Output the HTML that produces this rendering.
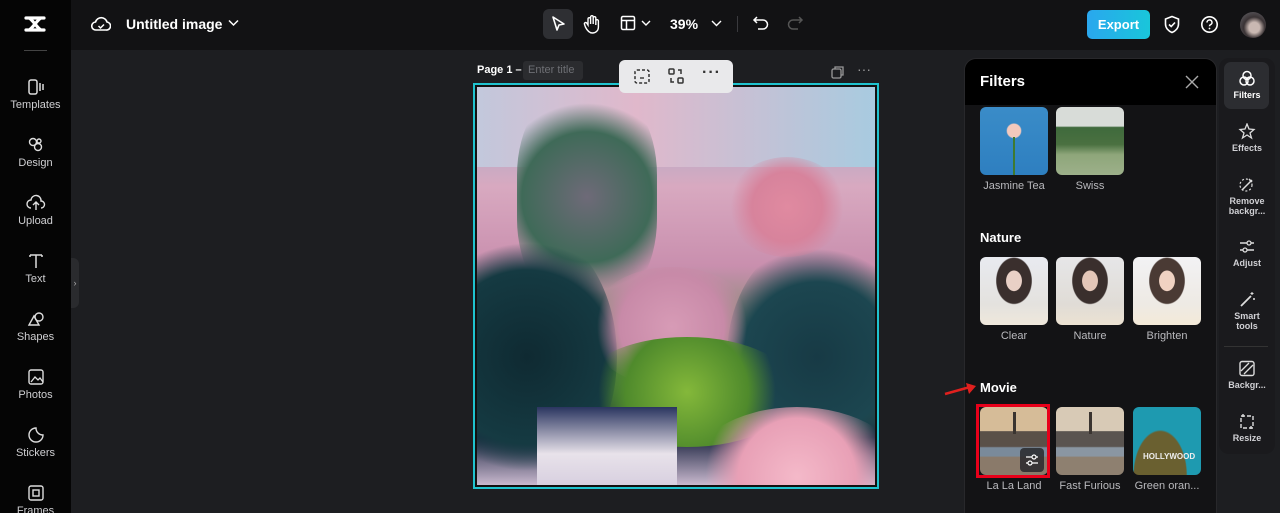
<!DOCTYPE html>
<html><head><meta charset="utf-8"><style>
*{margin:0;padding:0;box-sizing:border-box}
html,body{width:1280px;height:513px;overflow:hidden}
body{background:#1d1e21;font-family:"Liberation Sans",sans-serif;color:#fff;position:relative}
.abs{position:absolute}
#side{left:0;top:0;width:71px;height:513px;background:#050505}
.si{position:absolute;left:0;width:71px;text-align:center;font-size:11px;color:#cfcfd2}
.si svg{display:block;margin:0 auto 3px}
#top{left:71px;top:0;width:1209px;height:50px;background:#121214}
.th{position:absolute;width:68px;height:68px;border-radius:6px;overflow:hidden}
.tl{position:absolute;width:90px;text-align:center;font-size:11px;color:#b9b9bd}
.ri{position:absolute;left:1222px;width:50px;text-align:center;font-size:9px;color:#d0d0d4;font-weight:bold;line-height:10px}
.ri svg{display:block;margin:0 auto 3px}
</style></head><body>
<div id="side" class="abs">
 <svg class="abs" style="left:22px;top:14px" width="26" height="20" viewBox="0 0 26 20"><path d="M4 4h18M4 16h18M7 4c4 2 8 10 12 12M19 4C15 6 11 14 7 16" stroke="#fff" stroke-width="3.2" fill="none" stroke-linecap="round"/></svg>
 <div class="abs" style="left:24px;top:50px;width:23px;height:1px;background:#444"></div>
 <div class="si" style="top:78px"><svg width="18" height="18" viewBox="0 0 18 18"><rect x="2" y="2" width="8" height="14" rx="2" stroke="#ddd" stroke-width="1.5" fill="none"/><path d="M13 5v8M16 6v6" stroke="#ddd" stroke-width="1.5"/></svg>Templates</div>
 <div class="si" style="top:136px"><svg width="18" height="18" viewBox="0 0 18 18"><circle cx="6" cy="6" r="3.5" stroke="#ddd" stroke-width="1.4" fill="none"/><circle cx="11" cy="11" r="3.5" stroke="#ddd" stroke-width="1.4" fill="none"/><circle cx="12" cy="5" r="2" stroke="#ddd" stroke-width="1.4" fill="none"/></svg>Design</div>
 <div class="si" style="top:194px"><svg width="20" height="18" viewBox="0 0 20 18"><path d="M5 14a4 4 0 0 1 0-8 5 5 0 0 1 10 1 3.5 3.5 0 0 1 0 7M10 9v7M7 11l3-3 3 3" stroke="#ddd" stroke-width="1.4" fill="none"/></svg>Upload</div>
 <div class="si" style="top:252px"><svg width="18" height="18" viewBox="0 0 18 18"><path d="M3 3h12M9 3v13M3 3v2M15 3v2" stroke="#ddd" stroke-width="1.5" fill="none"/></svg>Text</div>
 <div class="si" style="top:310px"><svg width="18" height="18" viewBox="0 0 18 18"><path d="M2 15l5-9 5 9z" stroke="#ddd" stroke-width="1.4" fill="none"/><circle cx="12" cy="7" r="4" stroke="#ddd" stroke-width="1.4" fill="none"/></svg>Shapes</div>
 <div class="si" style="top:368px"><svg width="18" height="18" viewBox="0 0 18 18"><rect x="2" y="2" width="14" height="14" rx="2" stroke="#ddd" stroke-width="1.4" fill="none"/><path d="M4 14l4-5 3 3 2-2 3 4" stroke="#ddd" stroke-width="1.3" fill="none"/></svg>Photos</div>
 <div class="si" style="top:426px"><svg width="18" height="18" viewBox="0 0 18 18"><path d="M9 2a7 7 0 1 0 7 7c-4 0-7-3-7-7z" stroke="#ddd" stroke-width="1.4" fill="none"/></svg>Stickers</div>
 <div class="si" style="top:484px"><svg width="18" height="18" viewBox="0 0 18 18"><rect x="2" y="2" width="14" height="14" rx="2" stroke="#ddd" stroke-width="1.4" fill="none"/><rect x="6" y="6" width="6" height="6" stroke="#ddd" stroke-width="1.4" fill="none"/></svg>Frames</div>
</div>
<div class="abs" style="left:71px;top:258px;width:8px;height:50px;background:#2a2b2e;border-radius:0 6px 6px 0;font-size:9px;color:#aaa;line-height:50px;text-align:center">›</div>
<div id="top" class="abs"></div>
<svg class="abs" style="left:91px;top:15px" width="20" height="18" viewBox="0 0 20 18"><path d="M5 15a4 4 0 0 1-.5-8A6 6 0 0 1 16 7a4 4 0 0 1-1 8z" stroke="#fff" stroke-width="1.6" fill="none"/><path d="M7.5 11l2 2 3.5-3.5" stroke="#fff" stroke-width="1.5" fill="none"/></svg>
<div class="abs" style="left:126px;top:16px;font-size:14px;font-weight:bold">Untitled image</div>
<svg class="abs" style="left:228px;top:19px" width="11" height="8" viewBox="0 0 11 8"><path d="M1 1.5l4.5 4.5 4.5-4.5" stroke="#fff" stroke-width="1.5" fill="none"/></svg>
<div class="abs" style="left:543px;top:9px;width:30px;height:30px;background:#2e2f33;border-radius:6px"></div>
<svg class="abs" style="left:550px;top:15px" width="16" height="18" viewBox="0 0 16 18"><path d="M3 2l11 7-5 1-2 5z" stroke="#fff" stroke-width="1.6" fill="none" stroke-linejoin="round"/></svg>
<svg class="abs" style="left:583px;top:14px" width="18" height="20" viewBox="0 0 18 20"><path d="M5 11V5a1.3 1.3 0 0 1 2.6 0v5V3a1.3 1.3 0 0 1 2.6 0v7V4a1.3 1.3 0 0 1 2.6 0v7-4a1.3 1.3 0 0 1 2.6 0v6c0 4-3 6-6 6s-5-2-7-6l-1-3a1.3 1.3 0 0 1 2.3-1z" stroke="#fff" stroke-width="1.4" fill="none"/></svg>
<svg class="abs" style="left:620px;top:15px" width="16" height="16" viewBox="0 0 16 16"><rect x="1.5" y="1.5" width="13" height="13" rx="1.5" stroke="#fff" stroke-width="1.5" fill="none"/><path d="M1.5 5.5h13M6.5 5.5v9" stroke="#fff" stroke-width="1.5"/></svg>
<svg class="abs" style="left:641px;top:20px" width="10" height="7" viewBox="0 0 10 7"><path d="M1 1l4 4 4-4" stroke="#fff" stroke-width="1.4" fill="none"/></svg>
<div class="abs" style="left:670px;top:16px;font-size:14px;font-weight:bold">39%</div>
<svg class="abs" style="left:711px;top:20px" width="11" height="7" viewBox="0 0 11 7"><path d="M1 1l4.5 4.5L10 1" stroke="#fff" stroke-width="1.4" fill="none"/></svg>
<div class="abs" style="left:737px;top:16px;width:1px;height:16px;background:#3a3a3e"></div>
<svg class="abs" style="left:752px;top:15px" width="18" height="16" viewBox="0 0 18 16"><path d="M5 2L2 5l3 3M2 5h9a4.5 4.5 0 0 1 0 9H6" stroke="#fff" stroke-width="1.5" fill="none"/></svg>
<svg class="abs" style="left:786px;top:15px" width="18" height="16" viewBox="0 0 18 16"><path d="M13 2l3 3-3 3M16 5H7a4.5 4.5 0 0 0 0 9h5" stroke="#555" stroke-width="1.5" fill="none"/></svg>
<div class="abs" style="left:1087px;top:10px;width:63px;height:29px;border-radius:5px;background:linear-gradient(90deg,#2aa7ee,#19c6da);font-size:13px;font-weight:bold;line-height:29px;text-align:center">Export</div>
<svg class="abs" style="left:1163px;top:15px" width="18" height="19" viewBox="0 0 18 19"><path d="M9 1.5l6.5 2.5v5c0 4-3 7-6.5 8.5C5.5 16 2.5 13 2.5 9V4z" stroke="#fff" stroke-width="1.6" fill="none"/><path d="M6 9.5l2.2 2 3.8-4" stroke="#fff" stroke-width="1.6" fill="none"/></svg>
<svg class="abs" style="left:1200px;top:15px" width="19" height="19" viewBox="0 0 19 19"><circle cx="9.5" cy="9.5" r="7.7" stroke="#fff" stroke-width="1.6" fill="none"/><path d="M7 7.5a2.5 2.5 0 1 1 3.3 2.3c-.6.3-.8.7-.8 1.4" stroke="#fff" stroke-width="1.5" fill="none"/><circle cx="9.5" cy="13.5" r=".9" fill="#fff"/></svg>
<div class="abs" style="left:1240px;top:12px;width:26px;height:26px;border-radius:50%;background:radial-gradient(circle at 55% 60%,#c9b8b2 0 25%,#3a3335 50%,#6a6a70 100%)"></div>
<div class="abs" style="left:477px;top:64px;font-size:11px;font-weight:bold">Page 1 –</div>
<div class="abs" style="left:523px;top:61px;width:60px;height:19px;background:#2b2c2f;border-radius:3px;font-size:11px;color:#6e6f74;line-height:19px;padding-left:5px">Enter title</div>
<svg class="abs" style="left:831px;top:65px" width="14" height="14" viewBox="0 0 14 14"><rect x="1" y="4" width="9" height="9" rx="1.5" stroke="#999" stroke-width="1.3" fill="none"/><path d="M4 4V2h8v8h-2" stroke="#999" stroke-width="1.3" fill="none"/></svg>
<div class="abs" style="left:857px;top:61px;font-size:14px;color:#999">···</div>
<div class="abs" style="left:473px;top:83px;width:406px;height:406px;border:2px solid #1fc3cf;padding:2px;background:#111">
 <div style="width:398px;height:398px;position:relative;overflow:hidden;background:linear-gradient(180deg,#8fb0cf 0%,#d8a9c0 25%,#c98fae 45%,#6f8a60 65%,#2f5a3a 78%,#1c2440 88%,#c9b9cf 100%)">
  <div class="abs" style="left:0;top:0;width:398px;height:80px;background:linear-gradient(90deg,#c2c8dc,#e0b8cb 40%,#a8cbe0)"></div>
  <div class="abs" style="left:40px;top:0px;width:140px;height:220px;border-radius:40%;background:radial-gradient(circle,#6e6a78 0,#3f6a58 50%,transparent 72%)"></div>
  <div class="abs" style="left:-40px;top:140px;width:180px;height:260px;border-radius:50%;background:radial-gradient(circle,#0f2a32 0,#153a42 55%,transparent 72%)"></div>
  <div class="abs" style="left:250px;top:150px;width:180px;height:240px;border-radius:50%;background:radial-gradient(circle,#173a45 0,#1c4650 50%,transparent 72%)"></div>
  <div class="abs" style="left:110px;top:180px;width:170px;height:120px;border-radius:50%;background:radial-gradient(circle,#d79bb6 0,#c88aa8 50%,transparent 72%)"></div>
  <div class="abs" style="left:100px;top:250px;width:220px;height:110px;border-radius:50%;background:radial-gradient(circle,#84b83a 0,#4f8a2c 50%,transparent 72%)"></div>
  <div class="abs" style="left:250px;top:70px;width:120px;height:100px;border-radius:50%;background:radial-gradient(circle,#e08aa0 0,#d7839c 45%,transparent 72%)"></div>
  <div class="abs" style="left:60px;top:320px;width:140px;height:78px;background:linear-gradient(180deg,#2a3560,#e8e2ea 60%,#d8d0e0)"></div>
  <div class="abs" style="left:210px;top:320px;width:220px;height:140px;border-radius:50%;background:radial-gradient(circle,#f4b9c9 0,#e8a0b6 45%,transparent 70%)"></div>
 </div>
</div>
<div class="abs" style="left:619px;top:60px;width:114px;height:33px;background:#e9e9eb;border-radius:6px"></div>
<svg class="abs" style="left:633px;top:68px" width="18" height="17" viewBox="0 0 18 17"><rect x="2" y="2" width="14" height="13" rx="2" stroke="#333" stroke-width="1.5" fill="none" stroke-dasharray="3 2"/><path d="M7 10h4" stroke="#333" stroke-width="1.4"/></svg>
<svg class="abs" style="left:667px;top:67px" width="18" height="18" viewBox="0 0 18 18"><rect x="2" y="2" width="5" height="5" rx="1" stroke="#333" stroke-width="1.5" fill="none"/><rect x="11" y="11" width="5" height="5" rx="1" stroke="#333" stroke-width="1.5" fill="none"/><path d="M11 3h3v4M7 15H4v-4" stroke="#333" stroke-width="1.5" fill="none"/></svg>
<div class="abs" style="left:702px;top:64px;font-size:16px;color:#333;font-weight:bold;letter-spacing:1px">···</div>
<div class="abs" style="left:964px;top:58px;width:253px;height:455px;border-radius:12px 12px 0 0;background:#131315;border:1px solid #28282b;border-bottom:none;overflow:hidden">
 <div style="height:46px;background:#000;position:relative"><div class="abs" style="left:15px;top:14px;font-size:15px;font-weight:bold">Filters</div>
 <svg class="abs" style="left:220px;top:16px" width="14" height="14" viewBox="0 0 14 14"><path d="M1 1l12 12M13 1L1 13" stroke="#aaa" stroke-width="1.4"/></svg></div>
</div>
<div class="th" style="left:980px;top:107px;background:radial-gradient(circle at 50% 35%,#f3c9bd 0 12%,transparent 14%),linear-gradient(180deg,#3a8cc8,#2e7fc0)"><div class="abs" style="left:33px;top:30px;width:2px;height:38px;background:#3f7a30"></div></div>
<div class="th" style="left:1056px;top:107px;background:linear-gradient(180deg,#d8dcd8 0 28%,#3f6a3c 30%,#4a7040 55%,#8ea67a 70%,#9db08a)"></div>
<div class="tl" style="left:969px;top:180px">Jasmine Tea</div>
<div class="tl" style="left:1045px;top:180px">Swiss</div>
<div class="abs" style="left:980px;top:230px;font-size:13px;font-weight:bold">Nature</div>
<div class="th" style="left:980px;top:257px;background:radial-gradient(ellipse at 50% 35%,#e9d0c6 0 16%,#3a2f2d 17% 36%,transparent 38%),linear-gradient(180deg,#e8eaf0,#e4e2de 70%,#efe8dc)"></div>
<div class="th" style="left:1056px;top:257px;background:radial-gradient(ellipse at 50% 35%,#e3c6b8 0 16%,#3a2f2d 17% 36%,transparent 38%),linear-gradient(180deg,#e6e6e8,#e0dcd6 70%,#ece2d2)"></div>
<div class="th" style="left:1133px;top:257px;background:radial-gradient(ellipse at 50% 35%,#f0d2c2 0 16%,#4a3a34 17% 36%,transparent 38%),linear-gradient(180deg,#f2f2f4,#eeeae4 70%,#f4ead8)"></div>
<div class="tl" style="left:969px;top:330px">Clear</div>
<div class="tl" style="left:1045px;top:330px">Nature</div>
<div class="tl" style="left:1122px;top:330px">Brighten</div>
<div class="abs" style="left:980px;top:380px;font-size:13px;font-weight:bold">Movie</div>
<svg class="abs" style="left:944px;top:382px" width="34" height="14" viewBox="0 0 34 14"><path d="M1 12L26 5" stroke="#e0201e" stroke-width="2.5"/><path d="M22 1l10 3-7 8z" fill="#e0201e"/></svg>
<div class="th" style="left:980px;top:407px;background:linear-gradient(180deg,#d6bc98 0 35%,#5a5048 36% 58%,#7a8a9a 60% 72%,#8a7a6a 74%)"><div class="abs" style="left:33px;top:5px;width:3px;height:22px;background:#3a3430"></div></div>
<div class="th" style="left:1056px;top:407px;background:linear-gradient(180deg,#d8cab6 0 35%,#5a5450 36% 58%,#8a96a2 60% 72%,#8e8070 74%)"><div class="abs" style="left:33px;top:5px;width:3px;height:22px;background:#3a3430"></div></div>
<div class="th" style="left:1133px;top:407px;background:radial-gradient(ellipse at 40% 100%,#6a6030 0 45%,transparent 47%),#1e9ab0"><div class="abs" style="left:10px;top:45px;font-size:8px;font-weight:bold;color:#eee">HOLLYWOOD</div></div>
<div class="abs" style="left:976px;top:404px;width:74px;height:74px;border:3px solid #e8001a"></div>
<div class="abs" style="left:1020px;top:448px;width:24px;height:24px;border-radius:4px;background:rgba(40,40,44,.85)"></div>
<svg class="abs" style="left:1024px;top:452px" width="16" height="16" viewBox="0 0 16 16"><path d="M2 5h12M2 11h12" stroke="#fff" stroke-width="1.3"/><circle cx="10" cy="5" r="2" fill="#333" stroke="#fff" stroke-width="1.2"/><circle cx="6" cy="11" r="2" fill="#333" stroke="#fff" stroke-width="1.2"/></svg>
<div class="tl" style="left:969px;top:480px">La La Land</div>
<div class="tl" style="left:1045px;top:480px">Fast Furious</div>
<div class="tl" style="left:1122px;top:480px">Green oran...</div>
<div class="abs" style="left:1219px;top:58px;width:56px;height:396px;background:#1a1a1d;border-radius:10px"></div>
<div class="abs" style="left:1224px;top:62px;width:45px;height:47px;background:#2c2d31;border-radius:7px"></div>
<div class="ri" style="top:70px"><svg width="18" height="17" viewBox="0 0 18 17"><circle cx="9" cy="5.5" r="4" stroke="#fff" stroke-width="1.5" fill="none"/><circle cx="6" cy="11" r="4" stroke="#fff" stroke-width="1.5" fill="none"/><circle cx="12" cy="11" r="4" stroke="#fff" stroke-width="1.5" fill="none"/></svg><span style="color:#fff">Filters</span></div>
<div class="ri" style="top:123px"><svg width="18" height="17" viewBox="0 0 18 17"><path d="M9 1l2 5 5 .5-4 3.5 1.5 5L9 12l-4.5 3 1.5-5-4-3.5 5-.5z" stroke="#ddd" stroke-width="1.3" fill="none"/></svg>Effects</div>
<div class="ri" style="top:176px"><svg width="18" height="17" viewBox="0 0 18 17"><path d="M4 14L14 4M11 3l3 3" stroke="#ddd" stroke-width="1.5" fill="none"/><circle cx="8" cy="9" r="6" stroke="#ddd" stroke-width="1.2" fill="none" stroke-dasharray="2 2"/></svg>Remove<br>backgr...</div>
<div class="ri" style="top:238px"><svg width="18" height="17" viewBox="0 0 18 17"><path d="M2 5h14M2 12h14" stroke="#ddd" stroke-width="1.4"/><circle cx="11" cy="5" r="2" fill="#1a1a1d" stroke="#ddd" stroke-width="1.3"/><circle cx="7" cy="12" r="2" fill="#1a1a1d" stroke="#ddd" stroke-width="1.3"/></svg>Adjust</div>
<div class="ri" style="top:291px"><svg width="18" height="17" viewBox="0 0 18 17"><path d="M3 15L13 5" stroke="#ddd" stroke-width="1.8"/><path d="M14 1v3M12.5 2.5h3M16 7v2M15 8h2" stroke="#ddd" stroke-width="1.1"/></svg>Smart<br>tools</div>
<div class="abs" style="left:1224px;top:346px;width:44px;height:1px;background:#333"></div>
<div class="ri" style="top:360px"><svg width="18" height="17" viewBox="0 0 18 17"><rect x="2" y="1.5" width="14" height="14" rx="2" stroke="#ddd" stroke-width="1.4" fill="none"/><path d="M3 11l8-8M6 14l9-9" stroke="#ddd" stroke-width="1.3"/></svg>Backgr...</div>
<div class="ri" style="top:413px"><svg width="18" height="17" viewBox="0 0 18 17"><rect x="3" y="3" width="12" height="12" stroke="#ddd" stroke-width="1.4" fill="none" stroke-dasharray="4 2"/><path d="M5 1v3M13 13v3" stroke="#ddd" stroke-width="1.4"/></svg>Resize</div>
</body></html>
